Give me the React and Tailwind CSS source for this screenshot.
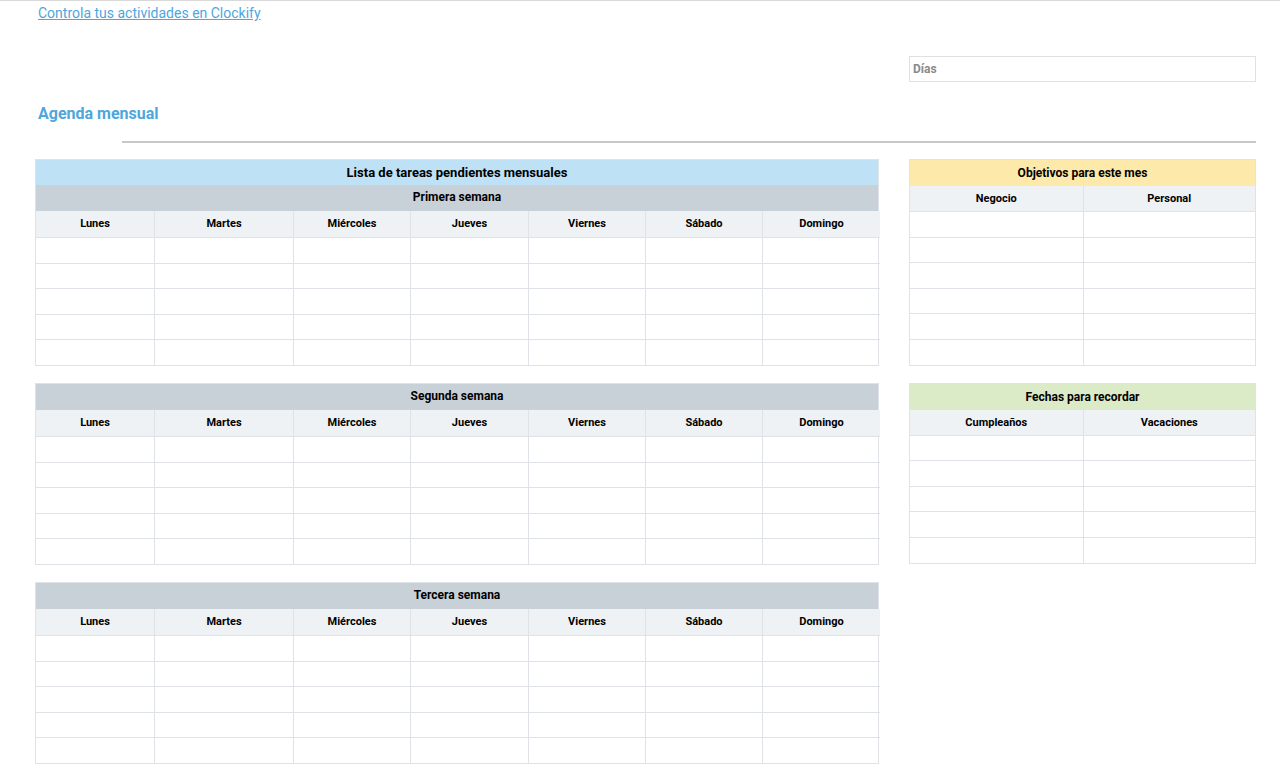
const days = ["Lunes","Martes","Miércoles","Jueves","Viernes","Sábado","Domingo"];
const cols = "grid-cols-[118px_139px_117px_118px_117px_117px_118px]";

function Week({ title, top }) {
  return (
    <div className="border border-[#dfe3e8] w-[844px]">
      {top && <div className="h-[25px] bg-[#bfe1f6] text-center text-[13px] font-bold text-black leading-[25px]">{top}</div>}
      <div className="h-[26px] bg-[#c9d1d8] text-center text-[12px] font-bold text-black leading-[24px]">{title}</div>
      <div className={`grid ${cols}`}>
        {days.map((d, i) => (
          <div key={d} className={`h-[26px] bg-[#eef2f5] text-center text-[11px] font-bold leading-[26px] ${i ? "border-l border-[#dfe3e8]" : ""}`}>{d}</div>
        ))}
        {Array.from({ length: 35 }).map((_, k) => (
          <div key={k} className={`h-[25.6px] border-t border-[#dfe3e8] ${k % 7 ? "border-l" : ""}`} />
        ))}
      </div>
    </div>
  );
}

function Side({ title, bg, a, b, rows }) {
  return (
    <div className="border border-[#dfe3e8] w-[347px]">
      <div className={`h-[26px] ${bg} text-center text-[12px] font-bold leading-[26px]`}>{title}</div>
      <div className="grid grid-cols-2">
        {[a, b].map((t, i) => (
          <div key={t} className={`h-[25px] bg-[#eef2f5] text-center text-[11px] font-bold leading-[25px] ${i ? "border-l border-[#dfe3e8]" : ""}`}>{t}</div>
        ))}
        {Array.from({ length: rows * 2 }).map((_, k) => (
          <div key={k} className={`h-[25.6px] border-t border-[#dfe3e8] ${k % 2 ? "border-l" : ""}`} />
        ))}
      </div>
    </div>
  );
}

export default function App() {
  return (
    <div className="w-[1280px] h-[771px] overflow-hidden bg-white border-t border-[#d9d9d9] text-black" style={{ fontFamily: "Roboto, 'Liberation Sans', sans-serif" }}>
      <div className="pl-[38px] h-[55px]">
        <a className="text-[14px] leading-[18px] text-[#4ea6dc] underline">Controla tus actividades en Clockify</a>
      </div>
      <div className="flex">
        <div className="w-[909px] pl-[38px] pt-[46px]">
          <div className="text-[16px] font-bold text-[#4ea6dc]">Agenda mensual</div>
        </div>
        <div className="w-[347px] h-[26px] border border-[#e0e0e0] text-[12px] font-bold text-[#8a8a8a] pl-[3px] leading-[24px]">Días</div>
      </div>
      <div className="ml-[122px] mt-[15px] w-[1134px] h-[2px] bg-[#c8c8c8]" />
      <div className="flex pl-[35px] pt-[16px] gap-[30px]">
        <div className="flex flex-col gap-[17px]">
          <Week top="Lista de tareas pendientes mensuales" title="Primera semana" />
          <Week title="Segunda semana" />
          <Week title="Tercera semana" />
        </div>
        <div className="flex flex-col gap-[17px]">
          <Side title="Objetivos para este mes" bg="bg-[#fde9a9]" a="Negocio" b="Personal" rows={6} />
          <Side title="Fechas para recordar" bg="bg-[#dcebc7]" a="Cumpleaños" b="Vacaciones" rows={5} />
        </div>
      </div>
    </div>
  );
}
